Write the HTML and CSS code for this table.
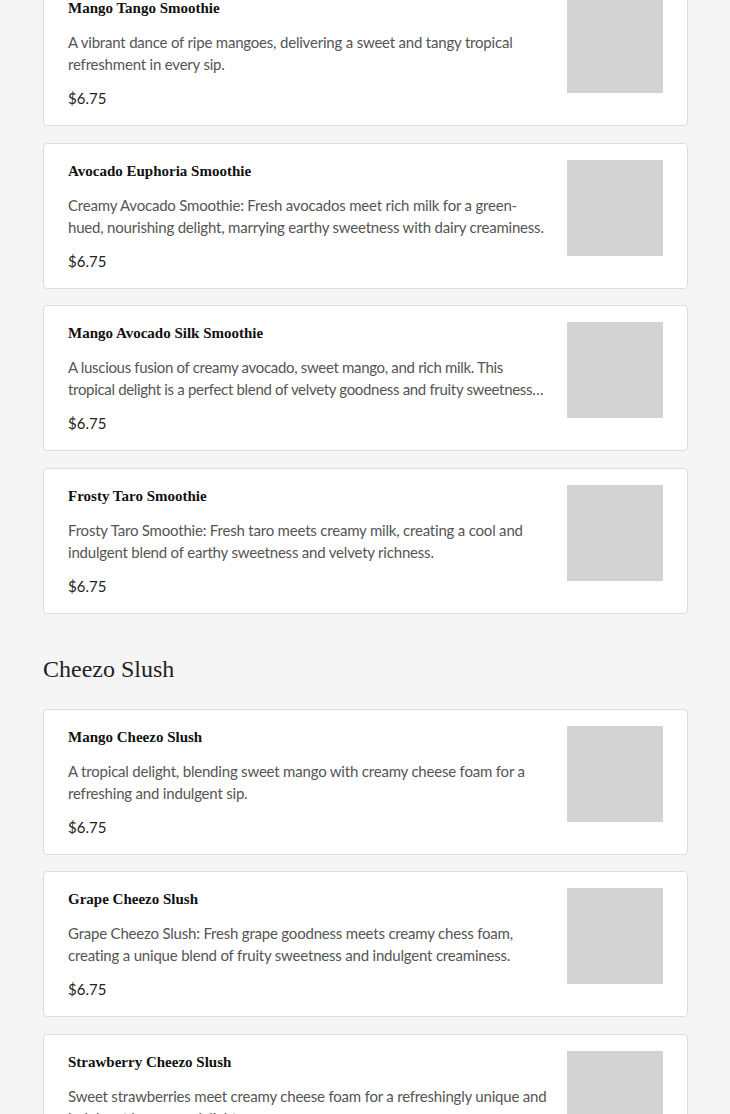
FILE: index.html
```html
<!DOCTYPE html>
<html lang="en">
<head>
<meta charset="utf-8">
<title>Menu</title>
<link rel="stylesheet" href="styles.css">
</head>
<body>
<main class="menu">
  <section class="category">
    <div class="items">
      <article class="item">
        <div class="item-text">
          <h3 class="item-name">Mango Tango Smoothie</h3>
          <p class="item-desc">A vibrant dance of ripe mangoes, delivering a sweet and tangy tropical refreshment in every sip.</p>
          <p class="item-price">$6.75</p>
        </div>
        <div class="item-img"></div>
      </article>
      <article class="item">
        <div class="item-text">
          <h3 class="item-name">Avocado Euphoria Smoothie</h3>
          <p class="item-desc">Creamy Avocado Smoothie: Fresh avocados meet rich milk for a green-hued, nourishing delight, marrying earthy sweetness with dairy creaminess.</p>
          <p class="item-price">$6.75</p>
        </div>
        <div class="item-img"></div>
      </article>
      <article class="item">
        <div class="item-text">
          <h3 class="item-name">Mango Avocado Silk Smoothie</h3>
          <p class="item-desc item-desc--tight">A luscious fusion of creamy avocado, sweet mango, and rich milk. This tropical delight is a perfect blend of velvety goodness and fruity sweetness…</p>
          <p class="item-price">$6.75</p>
        </div>
        <div class="item-img"></div>
      </article>
      <article class="item">
        <div class="item-text">
          <h3 class="item-name">Frosty Taro Smoothie</h3>
          <p class="item-desc">Frosty Taro Smoothie: Fresh taro meets creamy milk, creating a cool and indulgent blend of earthy sweetness and velvety richness.</p>
          <p class="item-price">$6.75</p>
        </div>
        <div class="item-img"></div>
      </article>
    </div>
  </section>
  <section class="category">
    <h2 class="category-title">Cheezo Slush</h2>
    <div class="items">
      <article class="item">
        <div class="item-text">
          <h3 class="item-name">Mango Cheezo Slush</h3>
          <p class="item-desc">A tropical delight, blending sweet mango with creamy cheese foam for a refreshing and indulgent sip.</p>
          <p class="item-price">$6.75</p>
        </div>
        <div class="item-img"></div>
      </article>
      <article class="item">
        <div class="item-text">
          <h3 class="item-name">Grape Cheezo Slush</h3>
          <p class="item-desc">Grape Cheezo Slush: Fresh grape goodness meets creamy chess foam, creating a unique blend of fruity sweetness and indulgent creaminess.</p>
          <p class="item-price">$6.75</p>
        </div>
        <div class="item-img"></div>
      </article>
      <article class="item">
        <div class="item-text">
          <h3 class="item-name">Strawberry Cheezo Slush</h3>
          <p class="item-desc">Sweet strawberries meet creamy cheese foam for a refreshingly unique and indulgent beverage delight.</p>
          <p class="item-price">$6.75</p>
        </div>
        <div class="item-img"></div>
      </article>
    </div>
  </section>
</main>
</body>
</html>
```

FILE: styles.css
```css
html, body {
  margin: 0;
  padding: 0;
  background: #f5f5f5;
}

body {
  font-family: "Lato", "Liberation Sans", sans-serif;
  color: #222;
}

.menu {
  width: 645px;
  margin: -20px 0 0 43px;
  display: flex;
  flex-direction: column;
  gap: 39px;
}

.category {
  display: flex;
  flex-direction: column;
  gap: 24px;
}

.category-title {
  margin: 0;
  font-family: "Liberation Serif", "DejaVu Serif", serif;
  font-weight: 400;
  font-size: 24px;
  line-height: 32px;
  color: #222;
}

.items {
  display: flex;
  flex-direction: column;
  gap: 16.5px;
}

.item {
  display: flex;
  gap: 16px;
  background: #fff;
  border: 1px solid #dcdcdc;
  border-radius: 4px;
  padding: 16px 24px;
}

.item-text {
  flex: 1;
  min-width: 0;
  display: flex;
  flex-direction: column;
  gap: 12px;
}

.item-name {
  margin: 0;
  font-family: "Liberation Serif", "DejaVu Serif", serif;
  font-weight: 700;
  font-size: 15px;
  line-height: 22px;
  color: #111;
}

.item-desc {
  margin: 0;
  font-size: 15px;
  line-height: 22px;
  letter-spacing: -0.2px;
  color: #555;
}

.item-desc--tight {
  letter-spacing: -0.32px;
}

.item-price {
  margin: 0;
  font-size: 15px;
  line-height: 22px;
  color: #222;
}

.item-img {
  flex: none;
  width: 96px;
  height: 96px;
  background: #d3d3d3;
}
```
